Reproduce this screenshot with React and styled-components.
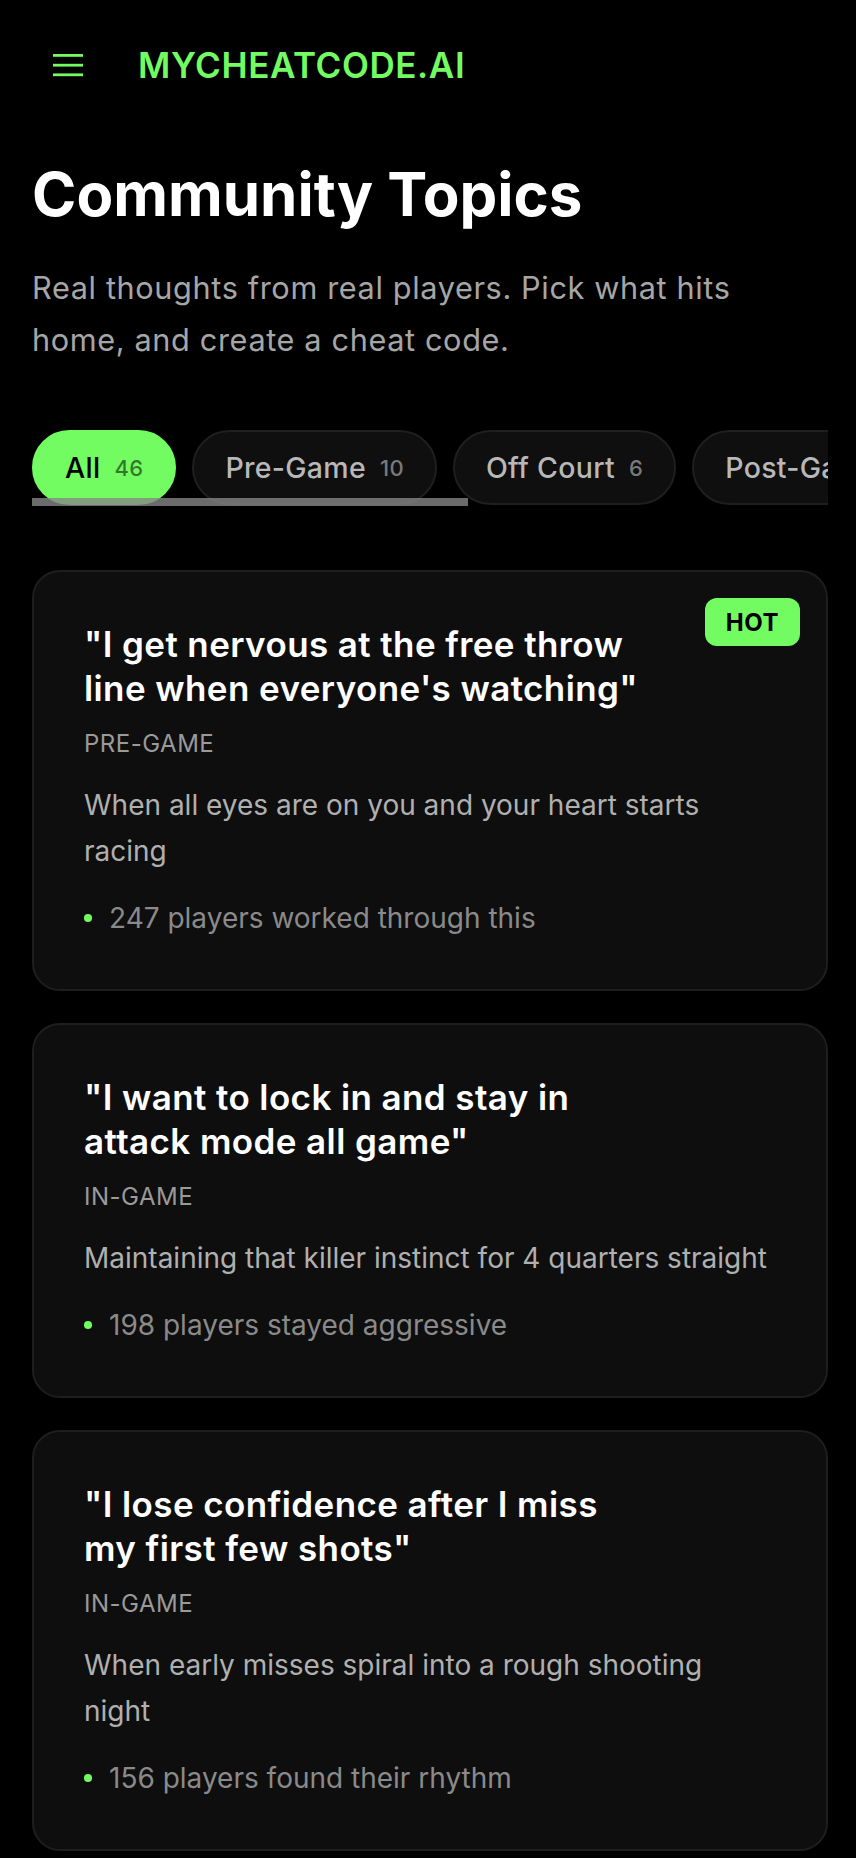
import React from 'react';
import styled, { createGlobalStyle } from 'styled-components';

const GREEN = '#72fc62';

const GlobalStyle = createGlobalStyle`
  html, body {
    margin: 0;
    padding: 0;
    background: #000;
  }
  body {
    font-family: Inter, "Noto Sans", sans-serif;
    color: #fff;
    -webkit-font-smoothing: antialiased;
  }
  * {
    box-sizing: border-box;
  }
`;

const Page = styled.div`
  min-height: 1858px;
  background: #000;
  padding: 0 28px 40px 32px;
`;

// Header
const Header = styled.header`
  height: 130px;
  display: flex;
  align-items: center;
  gap: 55px;
  padding-left: 21px;
`;

const MenuButton = styled.button`
  display: flex;
  align-items: center;
  justify-content: center;
  padding: 0;
  border: 0;
  background: none;
  color: ${GREEN};
  cursor: pointer;
`;

const Logo = styled.div`
  font-size: 35px;
  font-weight: 600;
  color: ${GREEN};
  letter-spacing: 0.6px;
`;

// Intro
const Heading = styled.h1`
  margin: 29px 0 0;
  font-size: 60px;
  line-height: 71px;
  font-weight: 700;
  letter-spacing: 0;
`;

const Subtitle = styled.p`
  margin: 32px 0 0;
  max-width: 740px;
  font-size: 30.7px;
  line-height: 52px;
  letter-spacing: 0.62px;
  color: #a6a6a6;
`;

// Tabs
const TabsWrap = styled.div`
  position: relative;
  margin-top: 64px;
  padding-bottom: 1px;
  overflow: hidden;
`;

const TabsRow = styled.div`
  display: flex;
  gap: 16px;
  width: max-content;
`;

const Pill = styled.button`
  flex: none;
  display: flex;
  align-items: center;
  gap: 14px;
  height: 75px;
  padding: 0 31px;
  border-radius: 999px;
  border: 2px solid ${p => (p.$active ? GREEN : '#1f1f1f')};
  background: ${p => (p.$active ? GREEN : '#0f0f0f')};
  color: ${p => (p.$active ? '#000' : '#b8b8b8')};
  font-family: inherit;
  font-size: 28.5px;
  font-weight: 500;
  letter-spacing: 0.3px;
`;

const PillCount = styled.span`
  font-size: 22px;
  font-weight: 500;
  color: ${p => (p.$active ? 'rgba(0, 0, 0, 0.55)' : '#7a7a7a')};
`;

const ScrollThumb = styled.div`
  position: absolute;
  left: 0;
  bottom: 0;
  width: 436px;
  height: 8px;
  background: rgba(134, 134, 134, 0.8);
`;

// Cards
const CardList = styled.div`
  display: flex;
  flex-direction: column;
  gap: 32px;
  margin-top: 64px;
`;

const Card = styled.div`
  position: relative;
  padding: 50px;
  background: #0e0e0e;
  border: 2px solid #1e1e1e;
  border-radius: 28px;
`;

const HotBadge = styled.span`
  position: absolute;
  top: 26px;
  right: 26px;
  height: 48px;
  padding: 0 21px;
  display: flex;
  align-items: center;
  border-radius: 12px;
  background: ${GREEN};
  color: #000;
  font-size: 24px;
  font-weight: 700;
  letter-spacing: 0.5px;
`;

const CardTitle = styled.h3`
  margin: 0;
  padding-right: 132px;
  font-size: 35px;
  line-height: 44px;
  font-weight: 600;
  letter-spacing: 0.4px;
  color: #fff;
`;

const Category = styled.div`
  margin-top: 16px;
  font-size: 24px;
  line-height: 36px;
  color: #9a9a9a;
  text-transform: uppercase;
  letter-spacing: 0.5px;
`;

const Description = styled.p`
  margin: 20px 0 0;
  font-size: 28px;
  line-height: 46px;
  color: #b0b0b0;
`;

const Stat = styled.div`
  display: flex;
  align-items: center;
  gap: 17px;
  margin-top: 23px;
  font-size: 28px;
  line-height: 42px;
  color: #8a8a8a;
`;

const Dot = styled.span`
  width: 8px;
  height: 8px;
  border-radius: 50%;
  background: ${GREEN};
  flex: none;
`;

const MenuIcon = () => (
  <svg width="30" height="23" viewBox="0 0 30 23" fill="currentColor">
    <rect x="0" y="0" width="30" height="2.8" />
    <rect x="0" y="9.8" width="30" height="2.8" />
    <rect x="0" y="19.4" width="30" height="2.8" />
  </svg>
);

const tabs = [
  { label: 'All', count: 46 },
  { label: 'Pre-Game', count: 10 },
  { label: 'Off Court', count: 6 },
  { label: 'Post-Game', count: 8 },
  { label: 'In-Game', count: 14 },
  { label: 'Practice', count: 8 },
];

const topics = [
  {
    title: '"I get nervous at the free throw line when everyone\'s watching"',
    category: 'Pre-Game',
    description: 'When all eyes are on you and your heart starts racing',
    stat: '247 players worked through this',
    hot: true,
  },
  {
    title: '"I want to lock in and stay in attack mode all game"',
    category: 'In-Game',
    description: 'Maintaining that killer instinct for 4 quarters straight',
    stat: '198 players stayed aggressive',
  },
  {
    title: '"I lose confidence after I miss my first few shots"',
    category: 'In-Game',
    description: 'When early misses spiral into a rough shooting night',
    stat: '156 players found their rhythm',
  },
];

const App = () => {
  const active = 'All';

  return (
    <>
      <GlobalStyle />
      <Page>
        <Header>
          <MenuButton aria-label="Menu">
            <MenuIcon />
          </MenuButton>
          <Logo>MYCHEATCODE.AI</Logo>
        </Header>

        <Heading>Community Topics</Heading>
        <Subtitle>
          Real thoughts from real players. Pick what hits home, and create a cheat code.
        </Subtitle>

        <TabsWrap>
          <TabsRow>
            {tabs.map(tab => (
              <Pill key={tab.label} $active={tab.label === active}>
                {tab.label}
                <PillCount $active={tab.label === active}>{tab.count}</PillCount>
              </Pill>
            ))}
          </TabsRow>
          <ScrollThumb />
        </TabsWrap>

        <CardList>
          {topics.map(topic => (
            <Card key={topic.title}>
              {topic.hot && <HotBadge>HOT</HotBadge>}
              <CardTitle>{topic.title}</CardTitle>
              <Category>{topic.category}</Category>
              <Description>{topic.description}</Description>
              <Stat>
                <Dot />
                {topic.stat}
              </Stat>
            </Card>
          ))}
        </CardList>
      </Page>
    </>
  );
};

export default App;
